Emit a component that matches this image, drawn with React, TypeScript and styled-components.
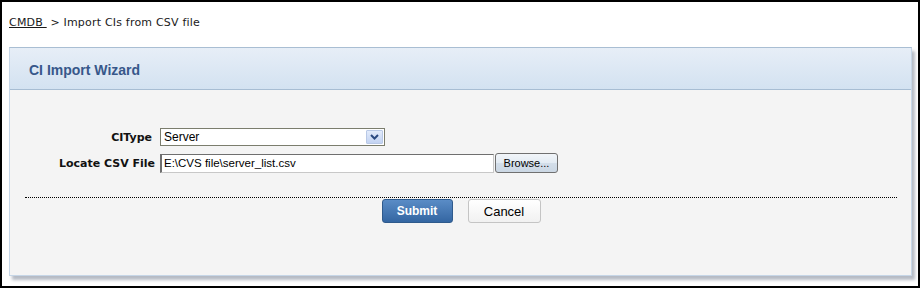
import React from "react";
import styled, { createGlobalStyle } from "styled-components";

const Global = createGlobalStyle`
  html, body { margin: 0; padding: 0; background: #fff; }
  * { box-sizing: border-box; }
`;

const Frame = styled.div`
  width: 920px;
  height: 288px;
  border: 2px solid #000;
  background: #fff;
  padding: 14px 5px 0 7px;
  font-family: "DejaVu Sans", Verdana, sans-serif;
`;

const Breadcrumb = styled.div`
  font-size: 11px;
  line-height: 13px;
  letter-spacing: 0.2px;
  color: #1a1a1a;
  height: 31px;
  white-space: pre;
`;

const CrumbLink = styled.a`
  color: #1a1a1a;
  text-decoration: underline;
`;

const Panel = styled.section`
  width: 903px;
  border: 1px solid #c6d6e7;
  border-top-color: #a9bed3;
  box-shadow: 3px 4px 3px rgba(110, 120, 140, 0.5);
  background: #f4f4f4;
`;

const PanelHeader = styled.header`
  height: 42px;
  padding: 3px 0 0 19px;
  display: flex;
  align-items: center;
  background: linear-gradient(#e7eef7, #d3e2f1);
  border-bottom: 1px solid #a7bdd3;
`;

const Title = styled.h2`
  margin: 0;
  font-family: "Liberation Sans", Arial, sans-serif;
  font-size: 14px;
  font-weight: bold;
  color: #37578a;
`;

const PanelBody = styled.div`
  padding: 38px 14px 52px 15px;
`;

const Form = styled.div`
  display: grid;
  grid-template-columns: 130px auto;
  column-gap: 5px;
  row-gap: 7px;
  align-items: center;
`;

const Label = styled.label<{ $shift?: number }>`
  justify-self: end;
  font-size: 11px;
  font-weight: bold;
  color: #111;
  margin-right: ${(p) => p.$shift ?? 0}px;
`;

const FakeSelect = styled.div`
  width: 225px;
  height: 18px;
  border: 1px solid #7b7d6d;
  background: #fff;
  display: flex;
  align-items: center;
  padding: 0 1px 0 3px;
  font-family: "Liberation Sans", Arial, sans-serif;
  font-size: 12px;
  color: #000;
`;

const SelectText = styled.span`
  flex: 1;
`;

const ArrowBox = styled.span`
  width: 17px;
  height: 14px;
  border: 1px solid #b9c9e6;
  border-radius: 1px;
  background: linear-gradient(#e2ebfb, #c3d3f2);
  display: flex;
  align-items: center;
  justify-content: center;
`;

const FileRow = styled.div`
  display: flex;
  align-items: center;
  gap: 1px;
`;

const FileInput = styled.input`
  width: 334px;
  height: 19px;
  margin: 0;
  border: 1px solid #c8c8c8;
  border-top: 1px solid #6f6f6f;
  border-left: 2px solid #6f6f6f;
  background: #fff;
  padding: 0 0 0 2px;
  font-family: "Liberation Sans", Arial, sans-serif;
  font-size: 11.5px;
  color: #000;
  outline: none;
`;

const BrowseButton = styled.button`
  width: 63px;
  height: 20px;
  margin: 0;
  padding: 0;
  border: 1px solid #707070;
  border-radius: 3px;
  background: linear-gradient(#f1f5f9 0%, #e3ebf3 50%, #d3dee9 51%, #cbd7e4 100%);
  font-family: "Liberation Sans", Arial, sans-serif;
  font-size: 11px;
  color: #000;
`;

const Divider = styled.hr`
  margin: 24px 0 0 0;
  border: 0;
  border-top: 1px dotted #000;
  height: 0;
`;

const Actions = styled.div`
  display: flex;
  justify-content: center;
  gap: 15px;
  margin-top: 1px;
`;

const SubmitButton = styled.button`
  width: 71px;
  height: 24px;
  margin: 0;
  border: 1px solid #2f5a8c;
  border-radius: 3px;
  background: linear-gradient(#5a8cc6, #3466a2);
  color: #fff;
  font-family: "Liberation Sans", Arial, sans-serif;
  font-size: 12px;
  font-weight: bold;
`;

const CancelButton = styled.button`
  width: 73px;
  height: 24px;
  margin: 0;
  border: 1px solid #c4c4c4;
  border-radius: 3px;
  background: linear-gradient(#ffffff, #f1f1f1);
  color: #000;
  font-family: "Liberation Sans", Arial, sans-serif;
  font-size: 13px;
`;

export default function App() {
  return (
    <>
      <Global />
      <Frame>
        <Breadcrumb>
          <CrumbLink>CMDB </CrumbLink>
          {" > Import CIs from CSV file"}
        </Breadcrumb>
        <Panel>
          <PanelHeader>
            <Title>CI Import Wizard</Title>
          </PanelHeader>
          <PanelBody>
            <Form>
              <Label $shift={3}>CIType</Label>
              <FakeSelect>
                <SelectText>Server</SelectText>
                <ArrowBox>
                  <svg width="9" height="6" viewBox="0 0 9 6">
                    <path d="M1 1 L4.5 4.5 L8 1" fill="none" stroke="#2b4a80" strokeWidth="2" />
                  </svg>
                </ArrowBox>
              </FakeSelect>
              <Label>Locate CSV File</Label>
              <FileRow>
                <FileInput readOnly value="E:\CVS file\server_list.csv" />
                <BrowseButton>Browse...</BrowseButton>
              </FileRow>
            </Form>
            <Divider />
            <Actions>
              <SubmitButton>Submit</SubmitButton>
              <CancelButton>Cancel</CancelButton>
            </Actions>
          </PanelBody>
        </Panel>
      </Frame>
    </>
  );
}
